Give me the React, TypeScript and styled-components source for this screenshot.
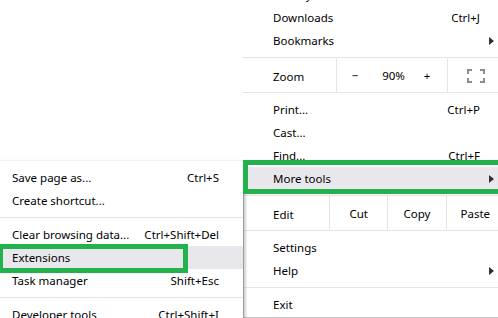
import styled, { createGlobalStyle } from 'styled-components';

const GlobalStyle = createGlobalStyle`
  html, body {
    margin: 0;
    padding: 0;
    background: #fff;
  }
  body {
    font-family: "Noto Sans", "Open Sans", Arial, sans-serif;
    font-size: 11.5px;
    color: #000;
    overflow: hidden;
  }
`;

const Page = styled.div`
  position: relative;
  width: 498px;
  height: 318px;
  overflow: hidden;
  background: #fff;
`;

const Menu = styled.div`
  position: absolute;
  width: 261px;
  background: #fff;
  display: flex;
  flex-direction: column;
`;

const MainMenu = styled(Menu)`
  left: 243px;
  top: -25px;
  padding: 8px 0 1px;
  border-bottom: 1px solid #c4c4c4;
`;

const SubMenu = styled(Menu)`
  left: -18px;
  top: 161px;
  padding: 5px 0 8px;
  border-right: 1px solid #9c9c9c;
  box-shadow: 2px 0 2px rgba(0, 0, 0, 0.18);
  z-index: 2;
`;

const Item = styled.div<{ $active?: boolean }>`
  display: flex;
  align-items: center;
  box-sizing: border-box;
  height: 23px;
  padding: 0 8px 0 30px;
  background: ${p => (p.$active ? '#e8e8ec' : 'transparent')};
  white-space: nowrap;
`;

const Label = styled.span`
  flex: 1;
`;

const Shortcut = styled.span`
  margin-right: 16px;
`;

const Arrow = styled.span`
  width: 0;
  height: 0;
  margin-left: auto;
  margin-right: 2px;
  border-top: 4px solid transparent;
  border-bottom: 4px solid transparent;
  border-left: 5px solid #303030;
`;

const Separator = styled.div`
  height: 1px;
  margin: 5px 0;
  background: #e4e4e4;
`;

const ButtonRow = styled.div`
  display: flex;
  height: 34px;
  margin: 5px 0;
  border-top: 1px solid #e4e4e4;
  border-bottom: 1px solid #e4e4e4;
`;

const RowLabel = styled.div<{ $width: number }>`
  width: ${p => p.$width}px;
  padding: 2px 0 0 30px;
  box-sizing: border-box;
  display: flex;
  align-items: center;
`;

const Cell = styled.div<{ $width?: number; $divider?: boolean; $push?: boolean }>`
  ${p => (p.$width ? `width: ${p.$width}px;` : 'flex: 1;')}
  ${p => (p.$push ? 'margin-left: auto;' : '')}
  box-sizing: border-box;
  padding-top: 1px;
  display: flex;
  align-items: center;
  justify-content: center;
  border-left: ${p => (p.$divider ? '1px solid #e4e4e4' : 'none')};
`;

const Annotation = styled.div<{ $x: number; $y: number; $w: number; $h: number }>`
  position: absolute;
  left: ${p => p.$x}px;
  top: ${p => p.$y}px;
  width: ${p => p.$w}px;
  height: ${p => p.$h}px;
  box-sizing: border-box;
  border: 5px solid #22b14c;
  z-index: 5;
`;

const FullscreenIcon = () => (
  <svg width="18" height="14" viewBox="0 0 18 14" fill="none" stroke="#8c8c8c" strokeWidth="2">
    <path d="M1 5V1h4M13 1h4v4M17 9v4h-4M5 13H1V9" />
  </svg>
);

export default function App() {
  return (
    <Page>
      <GlobalStyle />
      <MainMenu>
        <Item><Label>History</Label><Arrow /></Item>
        <Item><Label>Downloads</Label><Shortcut>Ctrl+J</Shortcut></Item>
        <Item><Label>Bookmarks</Label><Arrow /></Item>
        <ButtonRow>
          <RowLabel $width={93}>Zoom</RowLabel>
          <Cell $width={37} $divider>−</Cell>
          <Cell $width={41}>90%</Cell>
          <Cell $width={26}>+</Cell>
          <Cell $width={57} $divider $push><FullscreenIcon /></Cell>
        </ButtonRow>
        <Item><Label>Print...</Label><Shortcut>Ctrl+P</Shortcut></Item>
        <Item><Label>Cast...</Label></Item>
        <Item><Label>Find...</Label><Shortcut>Ctrl+F</Shortcut></Item>
        <Item $active><Label>More tools</Label><Arrow /></Item>
        <ButtonRow>
          <RowLabel $width={86}>Edit</RowLabel>
          <Cell $divider>Cut</Cell>
          <Cell $divider>Copy</Cell>
          <Cell $divider>Paste</Cell>
        </ButtonRow>
        <Item><Label>Settings</Label></Item>
        <Item><Label>Help</Label><Arrow /></Item>
        <Separator />
        <Item><Label>Exit</Label></Item>
      </MainMenu>

      <SubMenu>
        <Item><Label>Save page as...</Label><Shortcut>Ctrl+S</Shortcut></Item>
        <Item><Label>Create shortcut...</Label></Item>
        <Separator />
        <Item><Label>Clear browsing data...</Label><Shortcut>Ctrl+Shift+Del</Shortcut></Item>
        <Item $active><Label>Extensions</Label></Item>
        <Item><Label>Task manager</Label><Shortcut>Shift+Esc</Shortcut></Item>
        <Separator />
        <Item><Label>Developer tools</Label><Shortcut>Ctrl+Shift+I</Shortcut></Item>
      </SubMenu>

      <Annotation $x={243} $y={160} $w={262} $h={34} />
      <Annotation $x={-2} $y={244} $w={190} $h={29} />
    </Page>
  );
}
